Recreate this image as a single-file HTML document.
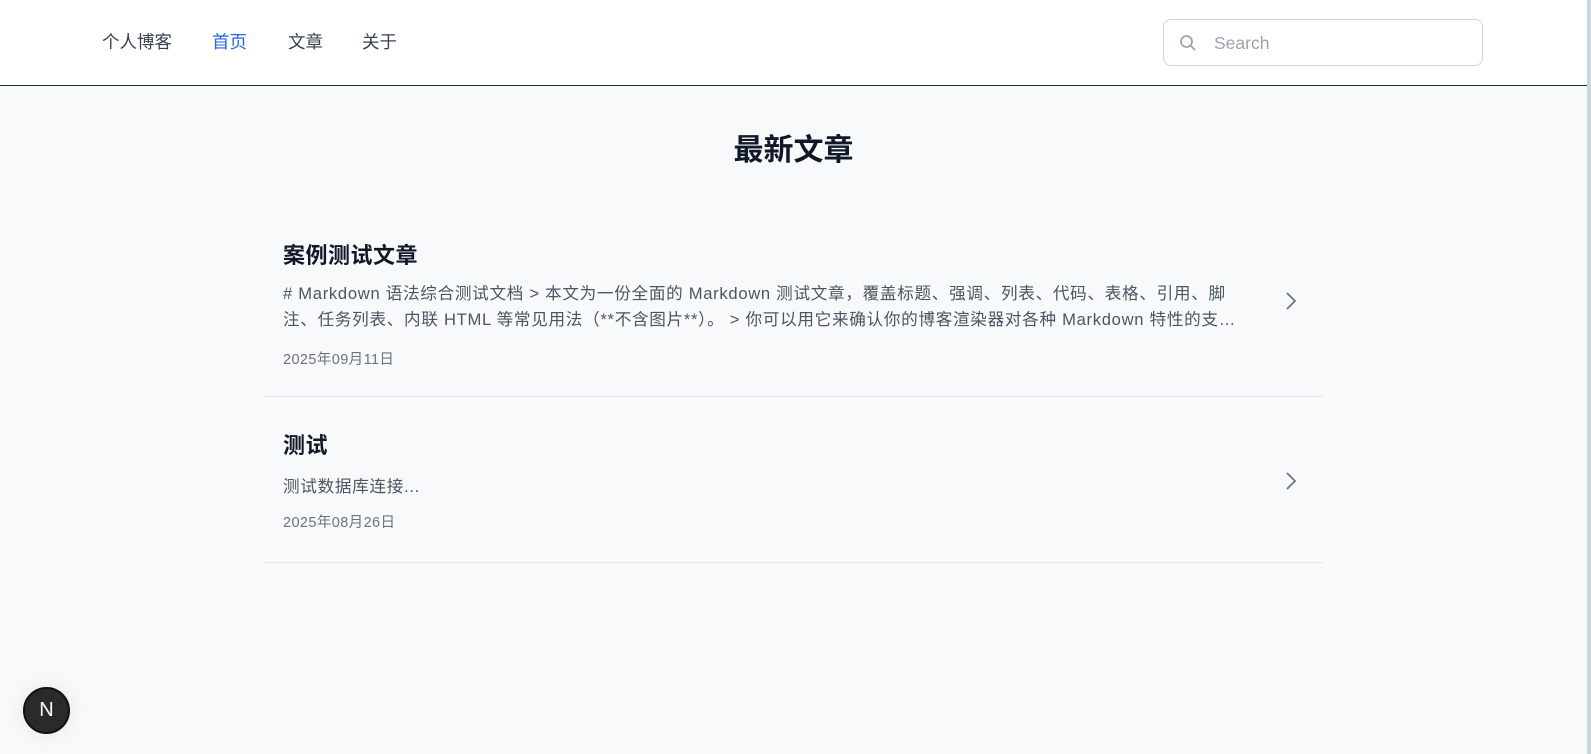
<!DOCTYPE html>
<html><head><meta charset="utf-8"><style>
*{margin:0;padding:0;box-sizing:border-box}
body{width:1591px;height:754px;overflow:hidden;background:#f8f9fb;font-family:"Liberation Sans","Noto Sans CJK SC",sans-serif;position:relative}
.hdr{position:absolute;left:0;top:0;width:1587px;height:86px;background:#fff;border-bottom:1px solid #1f2937}
.nav{position:absolute;top:29px;font-size:17.5px;color:#374151}
.search{position:absolute;left:1163px;top:19px;width:320px;height:47px;border:1px solid #d1d5db;border-radius:8px}
.search span{position:absolute;left:50px;top:13px;font-size:17.5px;color:#9ca3af}
.sb{position:absolute;left:1587px;top:0;width:4px;height:754px;background:#cbd5e1}
h1{position:absolute;top:125px;left:0;width:1587px;text-align:center;font-size:30px;color:#111827;font-weight:bold}
.item{position:absolute;left:263px;width:1060px;border-bottom:1px solid #e5e7eb}
.t{position:absolute;left:20px;font-size:22px;font-weight:bold;color:#111827;letter-spacing:.5px}
.d{position:absolute;left:20px;width:962px;font-size:16.6px;line-height:26px;color:#4b5563;letter-spacing:.7px}
.dt{position:absolute;left:20px;font-size:14.5px;color:#6b7280;letter-spacing:.4px}
.chev{position:absolute;left:1021px}
.n{position:absolute;left:23px;top:687px;width:47px;height:47px;border-radius:50%;background:#2a2a2a;border:2px solid #111;color:#fff;text-align:center;line-height:43px;font-size:20px;box-shadow:0 0 20px rgba(0,0,0,.08)}
</style></head><body>
<div class="hdr">
<div class="nav" style="left:102px">个人博客</div>
<div class="nav" style="left:212px;color:#2563eb">首页</div>
<div class="nav" style="left:288px">文章</div>
<div class="nav" style="left:362px">关于</div>
<div class="search"><svg style="position:absolute;left:15px;top:14px" width="18" height="18" viewBox="0 0 18 18" fill="none" stroke="#9ca3af" stroke-width="1.8"><circle cx="7.5" cy="7.5" r="5.5"/><path d="M11.5 11.5L16 16"/></svg><span>Search</span></div>
</div>
<div class="sb"></div>
<h1>最新文章</h1>
<div class="item" style="top:211px;height:186px">
<div class="t" style="top:27px">案例测试文章</div>
<div class="d" style="top:70px"># Markdown 语法综合测试文档 &gt; 本文为一份全面的 Markdown 测试文章，覆盖标题、强调、列表、代码、表格、引用、脚注、任务列表、内联 HTML 等常见用法（**不含图片**）。 &gt; 你可以用它来确认你的博客渲染器对各种 Markdown 特性的支…</div>
<div class="dt" style="top:137px">2025年09月11日</div>
<svg class="chev" style="top:80px" width="14" height="20" viewBox="0 0 14 20" fill="none" stroke="#6b7280" stroke-width="1.8"><path d="M3 2l8 8-8 8"/></svg>
</div>
<div class="item" style="top:397px;height:166px">
<div class="t" style="top:31px">测试</div>
<div class="d" style="top:77px">测试数据库连接...</div>
<div class="dt" style="top:114px">2025年08月26日</div>
<svg class="chev" style="top:74px" width="14" height="20" viewBox="0 0 14 20" fill="none" stroke="#6b7280" stroke-width="1.8"><path d="M3 2l8 8-8 8"/></svg>
</div>
<div class="n">N</div>
</body></html>
